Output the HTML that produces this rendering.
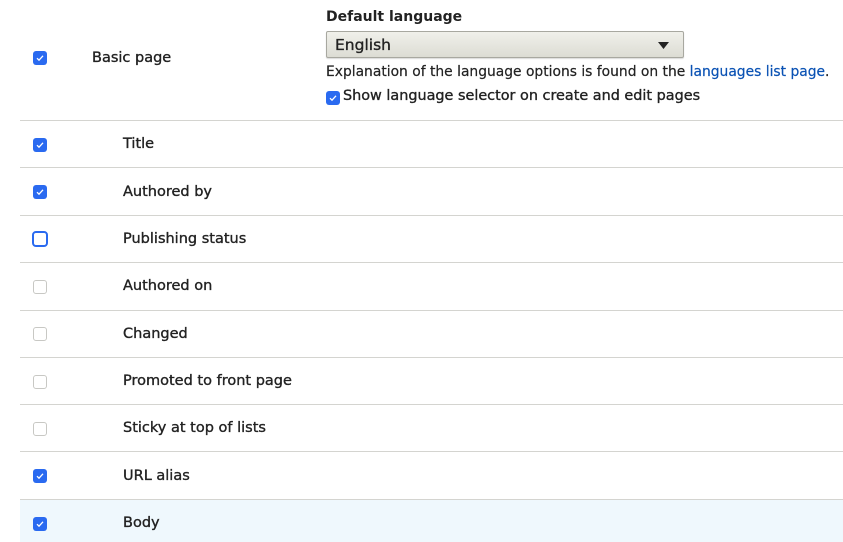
<!DOCTYPE html>
<html><head><meta charset="utf-8"><style>
*{margin:0;padding:0;box-sizing:border-box}
body{width:843px;height:542px;background:#fff;font-family:"DejaVu Sans","Liberation Sans",sans-serif;color:#222;position:relative;overflow:hidden;font-size:14.5px;-webkit-text-stroke:0.35px #222}
.a{position:absolute}
.line{position:absolute;left:20px;right:0;height:1px;background:#d4d4d0}
.cb{position:absolute;left:33px;width:14px;height:14px;border-radius:3px;background:#2a6af0;-webkit-text-stroke:0}
.cb svg{position:absolute;left:2px;top:2px}
.un{background:#fff;border:1.5px solid #c8c8c4}
.foc{background:#fff;border:2px solid #2a6af0;left:32px;width:16px;height:16px;border-radius:4px}
.lbl{position:absolute;left:123px;line-height:20px}
</style></head><body>
<div class="a" style="left:20px;top:499px;right:0;height:43px;background:#eff8fd"></div>

<div class="cb" style="top:51px"><svg width="10" height="10" viewBox="0 0 10 10"><path d="M2 5.2l2 2L8 2.8" stroke="#fff" stroke-width="1.3" fill="none"/></svg></div>
<div class="lbl" style="left:92px;top:48px">Basic page</div>

<div class="a" style="left:326px;top:9px;font-weight:bold;font-size:14px;-webkit-text-stroke:0">Default language</div>
<div class="a" style="left:326px;top:31px;width:358px;height:27px;border:1px solid #a8a8a0;border-radius:2px;background:linear-gradient(#f0f0ea,#dcdcd4);box-shadow:0 1px 1px rgba(0,0,0,.15)">
<span class="a" style="left:8px;top:4px;font-size:15.5px">English</span>
<svg class="a" style="left:331px;top:10px" width="11" height="8"><path d="M0 0H11L5.5 7Z" fill="#222"/></svg>
</div>
<div class="a" style="left:326px;top:64px;font-size:13.85px;-webkit-text-stroke:0.2px #222">Explanation of the language options is found on the <span style="color:#0a52b4;-webkit-text-stroke:0.2px #0a52b4">languages list page</span>.</div>
<div class="cb" style="left:326px;top:91px"><svg width="10" height="10" viewBox="0 0 10 10"><path d="M2 5.2l2 2L8 2.8" stroke="#fff" stroke-width="1.3" fill="none"/></svg></div>
<div class="a" style="left:343px;top:88px;font-size:14.4px">Show language selector on create and edit pages</div>

<div class="line" style="top:120px"></div>
<div class="line" style="top:167px"></div>
<div class="line" style="top:215px"></div>
<div class="line" style="top:262px"></div>
<div class="line" style="top:310px"></div>
<div class="line" style="top:357px"></div>
<div class="line" style="top:404px"></div>
<div class="line" style="top:451px"></div>
<div class="line" style="top:499px"></div>

<div class="cb" style="top:138px"><svg width="10" height="10" viewBox="0 0 10 10"><path d="M2 5.2l2 2L8 2.8" stroke="#fff" stroke-width="1.3" fill="none"/></svg></div>
<div class="lbl" style="top:134px">Title</div>
<div class="cb" style="top:185px"><svg width="10" height="10" viewBox="0 0 10 10"><path d="M2 5.2l2 2L8 2.8" stroke="#fff" stroke-width="1.3" fill="none"/></svg></div>
<div class="lbl" style="top:182px">Authored by</div>
<div class="cb foc" style="top:231px"></div>
<div class="lbl" style="top:229px">Publishing status</div>
<div class="cb un" style="top:280px"></div>
<div class="lbl" style="top:276px">Authored on</div>
<div class="cb un" style="top:327px"></div>
<div class="lbl" style="top:324px">Changed</div>
<div class="cb un" style="top:375px"></div>
<div class="lbl" style="top:371px">Promoted to front page</div>
<div class="cb un" style="top:422px"></div>
<div class="lbl" style="top:418px">Sticky at top of lists</div>
<div class="cb" style="top:469px"><svg width="10" height="10" viewBox="0 0 10 10"><path d="M2 5.2l2 2L8 2.8" stroke="#fff" stroke-width="1.3" fill="none"/></svg></div>
<div class="lbl" style="top:466px">URL alias</div>
<div class="cb" style="top:517px"><svg width="10" height="10" viewBox="0 0 10 10"><path d="M2 5.2l2 2L8 2.8" stroke="#fff" stroke-width="1.3" fill="none"/></svg></div>
<div class="lbl" style="top:513px">Body</div>
</body></html>
